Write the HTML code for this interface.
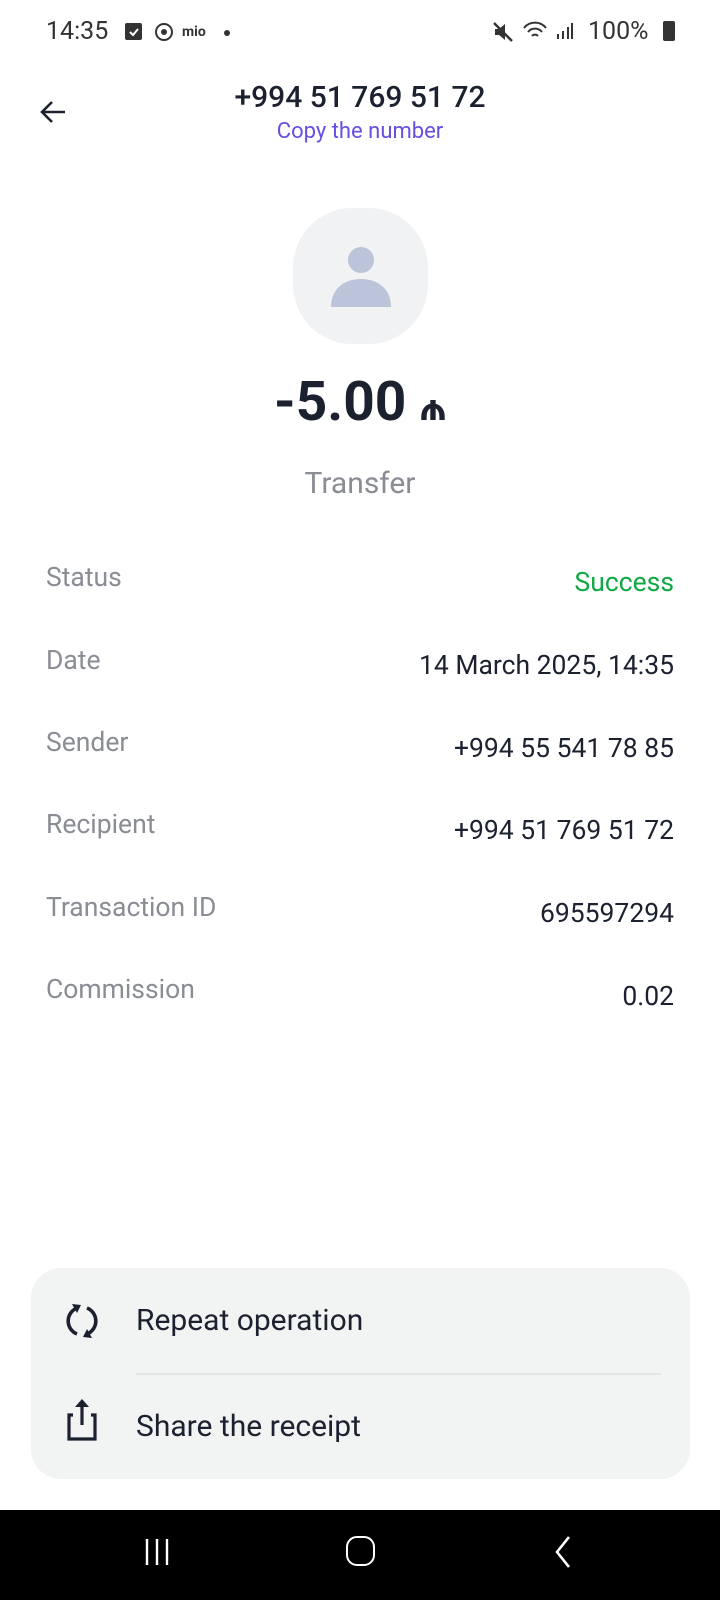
<!DOCTYPE html>
<html><head><meta charset="utf-8"><style>
*{margin:0;padding:0;box-sizing:border-box}
body{width:720px;height:1600px;background:#fff;font-family:"Roboto","Liberation Sans",sans-serif;color:#1c2130;position:relative;overflow:hidden}
.a{position:absolute;white-space:nowrap}
.lbl{left:46px;font-size:26.5px;color:#8a8d94}
.val{right:46px;font-size:26.5px;color:#1c2130;text-align:right}
</style></head><body>
<div class="a" style="left:46px;top:17px;font-size:25px;color:#333">14:35</div>
<div class="a" style="left:125px;top:23px;width:17px;height:17px;background:#333;border-radius:2px"></div>
<svg class="a" style="left:127px;top:25px" width="13" height="13"><path d="M3 7l3 3 5-6" stroke="#fff" stroke-width="2" fill="none"/></svg>
<svg class="a" style="left:153px;top:21px" width="22" height="22"><circle cx="11" cy="11" r="8" stroke="#333" stroke-width="2" fill="none"/><circle cx="11" cy="11" r="3" fill="#333"/></svg>
<div class="a" style="left:182px;top:24px;font-size:14px;color:#333;font-weight:bold">mio</div>
<div class="a" style="left:224px;top:30px;width:6px;height:6px;border-radius:50%;background:#333"></div>
<svg class="a" style="left:492px;top:21px" width="22" height="22"><path d="M3 8h4l6-5v16l-6-5H3z" fill="#333"/><path d="M2 2l18 18" stroke="#333" stroke-width="2.4"/></svg>
<svg class="a" style="left:522px;top:20px" width="28" height="22"><path d="M2 8a14 14 0 0 1 22 0M6 12a9 9 0 0 1 14 0M10 16a4 4 0 0 1 6 0" stroke="#333" stroke-width="2" fill="none"/></svg>
<svg class="a" style="left:556px;top:22px" width="18" height="18"><rect x="1" y="12" width="2" height="5" fill="#333"/><rect x="6" y="9" width="2" height="8" fill="#333"/><rect x="11" y="5" width="2" height="12" fill="#333"/><rect x="15" y="1" width="2" height="16" fill="#333"/></svg>
<div class="a" style="left:588px;top:17px;font-size:25px;color:#333">100%</div>
<div class="a" style="left:663px;top:21px;width:12px;height:20px;background:#333;border-radius:2px"></div>

<svg class="a" style="left:38px;top:99px" width="30" height="26"><path d="M27 13H5M14 3L4 13l10 10" stroke="#1c2130" stroke-width="2.6" fill="none"/></svg>
<div class="a" style="left:0;width:720px;text-align:center;top:80px;font-size:30px;font-weight:500">+994 51 769 51 72</div>
<div class="a" style="left:0;width:720px;text-align:center;top:119px;font-size:22px;color:#6a4ee0">Copy the number</div>

<div class="a" style="left:293px;top:208px;width:135px;height:136px;background:#f1f2f3;border-radius:44%"></div>
<svg class="a" style="left:328px;top:245px" width="66" height="66"><circle cx="33" cy="15" r="13" fill="#bcc4da"/><path d="M3 62c0-18 13-28 30-28s30 10 30 28z" fill="#bcc4da"/></svg>
<div class="a" style="left:0;width:720px;text-align:center;top:370px;font-size:55px;font-weight:bold">-5.00 <span style="font-size:38px">₼</span></div>
<div class="a" style="left:0;width:720px;text-align:center;top:466px;font-size:30px;color:#8a8d94">Transfer</div>

<div class="a lbl" style="top:562px">Status</div><div class="a val" style="top:567px;color:#10a845">Success</div>
<div class="a lbl" style="top:645px">Date</div><div class="a val" style="top:650px">14 March 2025, 14:35</div>
<div class="a lbl" style="top:727px">Sender</div><div class="a val" style="top:733px">+994 55 541 78 85</div>
<div class="a lbl" style="top:809px">Recipient</div><div class="a val" style="top:815px">+994 51 769 51 72</div>
<div class="a lbl" style="top:892px">Transaction ID</div><div class="a val" style="top:898px">695597294</div>
<div class="a lbl" style="top:974px">Commission</div><div class="a val" style="top:981px">0.02</div>

<div class="a" style="left:31px;top:1268px;width:659px;height:211px;background:#f2f3f3;border-radius:30px"></div>
<svg class="a" style="left:62px;top:1301px" width="40" height="40"><path d="M15 7A14 14 0 0 0 15 33M25 33A14 14 0 0 0 25 7" stroke="#1c2130" stroke-width="3.6" fill="none"/><path d="M10 3l9 1-4 8z" fill="#1c2130"/><path d="M30 37l-9-1 4-8z" fill="#1c2130"/></svg>
<div class="a" style="left:136px;top:1303px;font-size:30px">Repeat operation</div>
<div class="a" style="left:136px;top:1373px;width:525px;height:2px;background:#e3e5e6"></div>
<svg class="a" style="left:64px;top:1395px" width="36" height="48"><path d="M9 20H5v24h26V20h-4" stroke="#1c2130" stroke-width="3.2" fill="none"/><path d="M18 30V6" stroke="#1c2130" stroke-width="3.2"/><path d="M11 12l7-8 7 8z" fill="#1c2130"/></svg>
<div class="a" style="left:136px;top:1409px;font-size:30px">Share the receipt</div>

<div class="a" style="left:0;top:1510px;width:720px;height:90px;background:#000"></div>
<svg class="a" style="left:144px;top:1537px" width="30" height="30"><path d="M3 2v26M13 2v26M23 2v26" stroke="#fff" stroke-width="2.4"/></svg>
<div class="a" style="left:346px;top:1536px;width:29px;height:30px;border:2.6px solid #fff;border-radius:11px"></div>
<svg class="a" style="left:552px;top:1535px" width="22" height="34"><path d="M17 2L5 17l12 15" stroke="#fff" stroke-width="2.6" fill="none"/></svg>
</body></html>
